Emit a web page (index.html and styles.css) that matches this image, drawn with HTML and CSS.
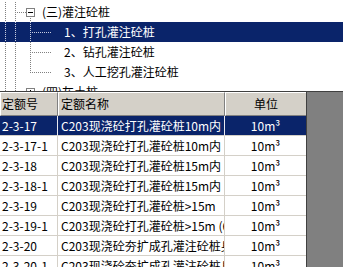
FILE: index.html
```html
<!DOCTYPE html>
<html lang="zh-CN">
<head>
<meta charset="utf-8">
<title>定额</title>
<link rel="stylesheet" href="styles.css">
</head>
<body>
<div class="tree">
  <div class="node parent open"><span class="box minus"></span><span class="label">(三)灌注砼桩</span></div>
  <div class="node child selected"><span class="label">1、打孔灌注砼桩</span></div>
  <div class="node child"><span class="label">2、钻孔灌注砼桩</span></div>
  <div class="node child last"><span class="label">3、人工挖孔灌注砼桩</span></div>
  <div class="node parent"><span class="box plus"></span><span class="label">(四)灰土桩</span></div>
</div>
<div class="grid-wrap">
  <div class="grid">
    <div class="row head"><div class="c c1">定额号</div><div class="c c2">定额名称</div><div class="c c3">单位</div></div>
    <div class="row sel"><div class="c c1">2-3-17</div><div class="c c2">C203现浇砼打孔灌砼桩10m内</div><div class="c c3">10m³</div></div>
    <div class="row"><div class="c c1">2-3-17-1</div><div class="c c2">C203现浇砼打孔灌砼桩10m内 (60根以内)</div><div class="c c3">10m³</div></div>
    <div class="row"><div class="c c1">2-3-18</div><div class="c c2">C203现浇砼打孔灌砼桩15m内</div><div class="c c3">10m³</div></div>
    <div class="row"><div class="c c1">2-3-18-1</div><div class="c c2">C203现浇砼打孔灌砼桩15m内 (60根以内)</div><div class="c c3">10m³</div></div>
    <div class="row"><div class="c c1">2-3-19</div><div class="c c2">C203现浇砼打孔灌砼桩&gt;15m</div><div class="c c3">10m³</div></div>
    <div class="row"><div class="c c1">2-3-19-1</div><div class="c c2">C203现浇砼打孔灌砼桩&gt;15m (60根以内)</div><div class="c c3">10m³</div></div>
    <div class="row"><div class="c c1">2-3-20</div><div class="c c2">C203现浇砼夯扩成孔灌注砼桩身</div><div class="c c3">10m³</div></div>
    <div class="row"><div class="c c1">2-3-20-1</div><div class="c c2">C203现浇砼夯扩成孔灌注砼桩身</div><div class="c c3">10m³</div></div>
  </div>
  <div class="filler"></div>
</div>
</body>
</html>
```
FILE: styles.css
```css
html, body {
  margin: 0;
  padding: 0;
}
body {
  width: 343px;
  height: 267px;
  overflow: hidden;
  background: #fff;
  font-family: "Noto Sans CJK SC", "Liberation Sans", sans-serif;
  font-size: 12px;
  color: #000;
}

/* ---------- tree ---------- */
.tree {
  height: 91px;
  padding-top: 2px;
  box-sizing: border-box;
  overflow: hidden;
}
.node {
  --dot: #808080;
  --vdot: repeating-linear-gradient(180deg, var(--dot) 0 1px, transparent 1px 2px);
  --hdot: repeating-linear-gradient(90deg, var(--dot) 0 1px, transparent 1px 2px);
  height: 20px;
  line-height: 20px;
  display: flex;
  align-items: flex-start;
  white-space: nowrap;
  background-repeat: no-repeat;
}
.node.parent {
  padding-left: 26px;
  background-image: var(--vdot), var(--vdot), var(--hdot);
  background-size: 1px 20px, 1px 20px, 11px 1px;
  background-position: 5px 0, 15px 0, 15px 10px;
}
.node.parent.open {
  background-image: var(--vdot), var(--vdot), var(--hdot), var(--vdot);
  background-size: 1px 20px, 1px 20px, 11px 1px, 1px 6px;
  background-position: 5px 0, 15px 0, 15px 10px, 30px 14px;
}
.node.child {
  padding-left: 64px;
  background-image: var(--vdot), var(--vdot), var(--vdot), var(--hdot);
  background-size: 1px 20px, 1px 20px, 1px 20px, 22px 1px;
  background-position: 5px 0, 15px 0, 30px 0, 30px 10px;
}
.node.child.last {
  background-size: 1px 20px, 1px 20px, 1px 11px, 22px 1px;
}
.node.selected {
  --dot: #c8cde0;
  background-color: #0a246a;
  color: #fff;
}
.box {
  width: 9px;
  height: 9px;
  margin-top: 6px;
  margin-right: 7px;
  box-sizing: border-box;
  border: 1px solid #808080;
  background: #fff;
  display: flex;
  align-items: center;
  justify-content: center;
  position: relative;
}
.box::before {
  content: "";
  width: 5px;
  height: 1px;
  background: #000;
}
.box.plus::after {
  content: "";
  position: absolute;
  left: 3px;
  top: 1px;
  width: 1px;
  height: 5px;
  background: #000;
}

/* ---------- grid ---------- */
.grid-wrap {
  display: flex;
  height: 176px;
  border-top: 1px solid #404040;
  box-sizing: border-box;
  overflow: hidden;
}
.grid {
  width: 307px;
  flex: none;
  background: #fff;
  border-right: 1px solid #404040;
  box-sizing: border-box;
}
.filler {
  flex: 1;
  background: #808080;
}
.row {
  display: grid;
  grid-template-columns: 58px 167px 81px;
  height: 20px;
  line-height: 19px;
}
.c {
  box-sizing: border-box;
  border-right: 1px solid #d4d0c8;
  border-bottom: 1px solid #d4d0c8;
  white-space: nowrap;
  overflow: hidden;
}
.c3 {
  border-right: none;
  text-align: center;
}
.c1 { padding-left: 2px; }
.c2 { padding-left: 3px; }
.row.head {
  height: 24px;
  line-height: 22px;
  background: #d4d0c8;
}
.row.head .c {
  border-top: 1px solid #fff;
  border-left: 1px solid #fff;
  border-right: 1px solid #808080;
  border-bottom: 1px solid #808080;
}
.row.head .c1 { padding-left: 1px; }
.row.head .c2 { padding-left: 2px; }
.row.head .c3 { border-right: none; }
.row.sel {
  background: #0a246a;
  color: #fff;
}
.row.sel .c {
  border-right-color: #e8e8f0;
}
.row.sel .c3 { border-right: none; }
```
